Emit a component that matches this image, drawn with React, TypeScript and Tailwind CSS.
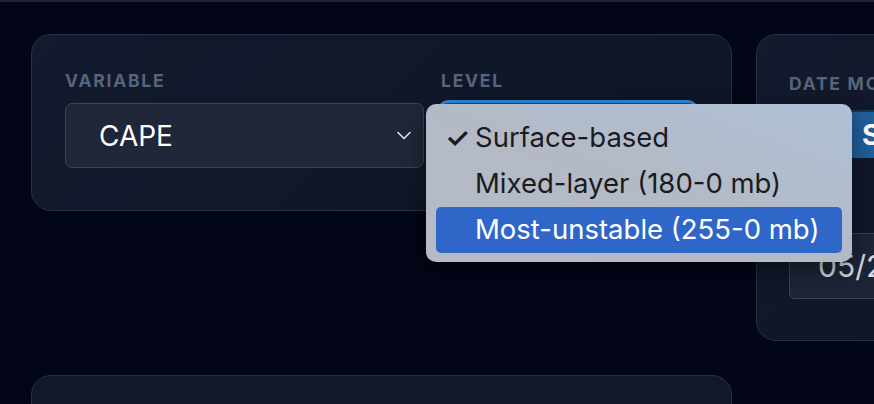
import React from "react";

function Chevron() {
  return (
    <svg width="14" height="9" viewBox="0 0 14 9" fill="none">
      <path d="M1 1.5 L7 7.5 L13 1.5" stroke="#e5e7eb" strokeWidth="1.6" strokeLinecap="round" strokeLinejoin="round" />
    </svg>
  );
}

export default function App() {
  return (
    <div
      className="relative w-[874px] h-[404px] overflow-hidden bg-[#020617]"
      style={{ fontFamily: "Inter, 'Liberation Sans', sans-serif" }}
    >
      <div className="h-[2px] bg-[#1e2538]" />
      <div className="flex gap-[24px] pl-[31px] pt-[32px]">
        {/* left column */}
        <div className="flex flex-col w-[701px] shrink-0">
          <div className="h-[177px] rounded-[20px] border border-[#263145] bg-[linear-gradient(135deg,#131a2d,#0f1526)] pl-[33px] pt-[36px]">
            <div className="flex gap-[17px]">
              <div className="w-[359px] flex flex-col gap-[12px]">
                <div className="text-[17.5px] leading-[20px] font-bold tracking-[0.1em] text-[#56647c]">VARIABLE</div>
                <div className="h-[65px] rounded-[7px] border border-[#3a4558] bg-[linear-gradient(90deg,#1e2638,#1f2739)] flex items-center justify-between pl-[33px] pr-[12px]">
                  <span className="text-[28px] text-white">CAPE</span>
                  <Chevron />
                </div>
              </div>
              <div className="w-[254px] flex flex-col gap-[12px]">
                <div className="text-[17.5px] leading-[20px] font-bold tracking-[0.1em] text-[#56647c]">LEVEL</div>
                <div className="h-[65px] rounded-[7px] border border-[#3a4558] bg-[#1e2638] ring-[3px] ring-[#2f8ae0]" />
              </div>
            </div>
          </div>
          <div className="mt-[164px] h-[60px] rounded-t-[20px] border border-[#263145] bg-[#111827]" />
        </div>
        {/* right card */}
        <div className="w-[300px] shrink-0 h-[307px] rounded-[20px] border border-[#263145] bg-[linear-gradient(135deg,#131a2d,#0f1526)] pl-[32px] pt-[39px] flex flex-col">
          <div className="text-[17.5px] leading-[20px] font-bold tracking-[0.1em] text-[#56647c] whitespace-nowrap">DATE MODE</div>
          <div className="mt-[16px] h-[48px] w-[240px] rounded-[4px] bg-[#215f9d] border-t-2 border-[#1b3550] flex items-center pl-[73px]">
            <span className="text-[28px] font-bold text-white">Single</span>
          </div>
          <div className="mt-[75px] h-[66px] w-[240px] rounded-[6px] border border-[#3a4558] bg-[linear-gradient(135deg,#1e2638,#1a2133)] flex items-center pl-[28px]">
            <span className="text-[30px] text-[#d5dbe3]">05/20/2024</span>
          </div>
        </div>
      </div>

      {/* native dropdown menu overlay */}
      <div className="absolute left-[426px] top-[104px] w-[426px] h-[158px] rounded-[10px] bg-[linear-gradient(20deg,#b6bbc5,#b3bac6_50%,#afc0d6)] shadow-[0_8px_24px_rgba(0,0,0,0.45)] px-[10px] pt-[11px]">
        <div className="h-[46px] flex items-center text-[#1b1b1d] text-[27.5px]">
          <span className="w-[39px] pl-[9px] text-[28px] font-semibold leading-none">✓</span>
          <span>Surface-based</span>
        </div>
        <div className="h-[46px] flex items-center text-[#1b1b1d] text-[27.5px]">
          <span className="w-[39px]" />
          <span>Mixed-layer (180-0 mb)</span>
        </div>
        <div className="h-[46px] flex items-center rounded-[5px] bg-[#2f67c9] text-white text-[27.5px]">
          <span className="w-[39px]" />
          <span>Most-unstable (255-0 mb)</span>
        </div>
      </div>
    </div>
  );
}
